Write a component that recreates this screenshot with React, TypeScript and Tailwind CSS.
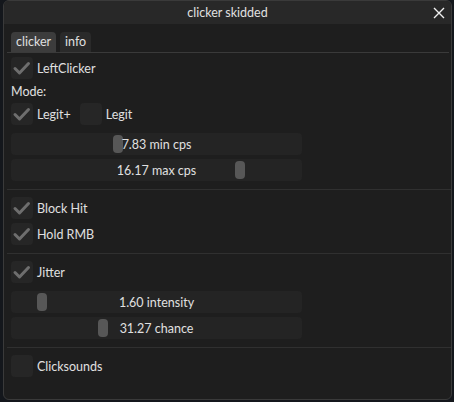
import React from "react";

const font = { fontFamily: 'Lato, "Noto Sans", sans-serif' };

function Check({ checked }: { checked: boolean }) {
  return (
    <div className="w-[22px] h-[22px] rounded-[4px] bg-[#262626] shrink-0 flex items-center justify-center">
      {checked && (
        <svg width="22" height="22" viewBox="0 0 22 22">
          <polyline points="4,11.5 8.5,16 17.5,6.5" fill="none" stroke="#6e6e6e" strokeWidth="3" strokeLinecap="round" strokeLinejoin="round" />
        </svg>
      )}
    </div>
  );
}

function CheckRow({ label, checked, className = "" }: { label: string; checked: boolean; className?: string }) {
  return (
    <div className={"flex items-center h-[22px] gap-[4px] " + className}>
      <Check checked={checked} />
      <span className="text-[12.5px] text-[#e0e0e0] leading-none translate-y-[1px]">{label}</span>
    </div>
  );
}

function Slider({ label, grab, className = "" }: { label: string; grab: number; className?: string }) {
  return (
    <div className={"relative w-[291px] h-[22px] rounded-[4px] bg-[#242424] flex items-center justify-center " + className}>
      <div className="absolute top-[2px] w-[10px] h-[18px] rounded-[4px] bg-[#575757]" style={{ left: grab }} />
      <span className="relative text-[12.5px] text-[#e0e0e0] leading-none translate-y-[1px]">{label}</span>
    </div>
  );
}

function Sep({ className = "" }: { className?: string }) {
  return <div className={"h-px bg-[#303030] ml-[-4px] mr-[-2px] " + className} />;
}

export default function App() {
  return (
    <div className="w-[454px] h-[402px] bg-[#14171c] pl-[3px] overflow-hidden" style={font}>
      <div className="w-[449px] h-[400px] rounded-[6px] border border-[#3a3a3a] bg-[#1e1e1e] flex flex-col overflow-hidden">
        <div className="h-[23px] bg-[#282828] flex items-center justify-center relative shrink-0">
          <span className="text-[12.5px] text-[#e0e0e0] leading-none translate-y-[1px]">clicker skidded</span>
          <svg className="absolute right-[6px] top-[6px]" width="12" height="12" viewBox="0 0 12 12">
            <path d="M1 1 L11 11 M11 1 L1 11" stroke="#f0f0f0" strokeWidth="1.4" />
          </svg>
        </div>
        <div className="flex flex-col pl-[3px] pr-[2px]">
          <div className="mt-[8px] flex gap-[4px] pl-[4px] border-b border-[#3a3a3a]">
            <div className="h-[20px] px-[5px] rounded-t-[4px] bg-[#3c3c3c] flex items-center text-[12.5px] text-[#e0e0e0] leading-none">clicker</div>
            <div className="h-[20px] px-[5px] rounded-t-[4px] bg-[#2a2a2a] flex items-center text-[12.5px] text-[#e0e0e0] leading-none">info</div>
          </div>
          <div className="flex flex-col pl-[4px]">
            <CheckRow label="LeftClicker" checked className="mt-[4px]" />
            <div className="h-[17px] mt-[4px] flex items-center text-[12.5px] text-[#e0e0e0] leading-none translate-y-[1px]">Mode:</div>
            <div className="flex items-center mt-[3px] h-[22px]">
              <CheckRow label="Legit+" checked />
              <CheckRow label="Legit" checked={false} className="ml-[9px]" />
            </div>
            <Slider label="7.83 min cps" grab={102} className="mt-[8px]" />
            <Slider label="16.17 max cps" grab={224} className="mt-[4px]" />
            <Sep className="mt-[8px]" />
            <CheckRow label="Block Hit" checked className="mt-[7px]" />
            <CheckRow label="Hold RMB" checked className="mt-[4px]" />
            <Sep className="mt-[8px]" />
            <CheckRow label="Jitter" checked className="mt-[7px]" />
            <Slider label="1.60 intensity" grab={26} className="mt-[8px]" />
            <Slider label="31.27 chance" grab={87} className="mt-[4px]" />
            <Sep className="mt-[8px]" />
            <CheckRow label="Clicksounds" checked={false} className="mt-[7px]" />
          </div>
        </div>
      </div>
    </div>
  );
}
